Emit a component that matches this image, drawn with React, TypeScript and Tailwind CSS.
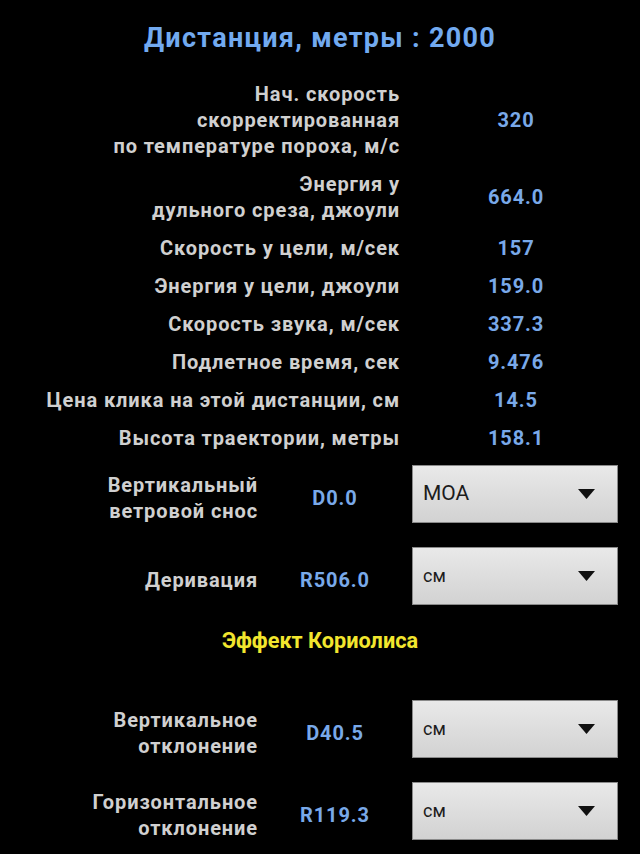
const labelFont = "font-['Roboto',sans-serif] font-bold tracking-[0.9px]";

const topRows: { label: string[]; value: string }[] = [
  { label: ["Нач. скорость", "скорректированная", "по температуре пороха, м/с"], value: "320" },
  { label: ["Энергия у", "дульного среза, джоули"], value: "664.0" },
  { label: ["Скорость у цели, м/сек"], value: "157" },
  { label: ["Энергия у цели, джоули"], value: "159.0" },
  { label: ["Скорость звука, м/сек"], value: "337.3" },
  { label: ["Подлетное время, сек"], value: "9.476" },
  { label: ["Цена клика на этой дистанции, см"], value: "14.5" },
  { label: ["Высота траектории, метры"], value: "158.1" },
];

function Dropdown({ value, small }: { value: string; small?: boolean }) {
  return (
    <div className="mb-[9px] flex h-[58px] w-[206px] items-center justify-between border border-[#8a8a8a] bg-gradient-to-b from-[#e9e9e9] to-[#d2d2d2] pl-[10px] pr-[22px]">
      <span
        className={`font-['Roboto',sans-serif] text-[#1c1c1c] ${small ? "text-[18px]" : "text-[21px]"}`}
      >
        {value}
      </span>
      <svg width="17" height="10" viewBox="0 0 17 10">
        <path d="M0 0 H17 L8.5 10 Z" fill="#111" />
      </svg>
    </div>
  );
}

function LowerRow({ label, value, unit }: { label: string[]; value: string; unit: string }) {
  return (
    <div className="flex h-[82px] items-center">
      <div className={`w-[258px] text-right text-[20px] leading-[26px] text-[#d0d0d0] ${labelFont}`}>
        {label.map((l) => (
          <div key={l}>{l}</div>
        ))}
      </div>
      <div className={`w-[154px] text-center text-[20px] text-[#79a9e9] ${labelFont}`}>{value}</div>
      <Dropdown value={unit} small={unit === "см"} />
    </div>
  );
}

export default function App() {
  return (
    <div className="min-h-[854px] w-[640px] bg-black pt-[20px]">
      <h1 className="text-center font-['Roboto',sans-serif] text-[27px] font-bold leading-[36px] tracking-[1.3px] text-[#72aaf0]">
        Дистанция, метры : 2000
      </h1>

      <div className="mt-[19px] flex flex-col">
        {topRows.map((r) => (
          <div key={r.value} className="flex items-center py-[6px]">
            <div className={`w-[400px] text-right text-[20px] leading-[26px] text-[#d0d0d0] ${labelFont}`}>
              {r.label.map((l) => (
                <div key={l}>{l}</div>
              ))}
            </div>
            <div className={`w-[232px] text-center text-[20px] leading-[26px] text-[#79a9e9] ${labelFont}`}>
              {r.value}
            </div>
          </div>
        ))}
      </div>

      <LowerRow label={["Вертикальный", "ветровой снос"]} value="D0.0" unit="MOA" />
      <LowerRow label={["Деривация"]} value="R506.0" unit="см" />

      <div className="mt-[7px] text-center font-['Roboto',sans-serif] text-[21.7px] font-bold leading-[26px] text-[#f2e62e]">
        Эффект Кориолиса
      </div>

      <div className="mt-[38px]">
        <LowerRow label={["Вертикальное", "отклонение"]} value="D40.5" unit="см" />
        <LowerRow label={["Горизонтальное", "отклонение"]} value="R119.3" unit="см" />
      </div>
    </div>
  );
}
